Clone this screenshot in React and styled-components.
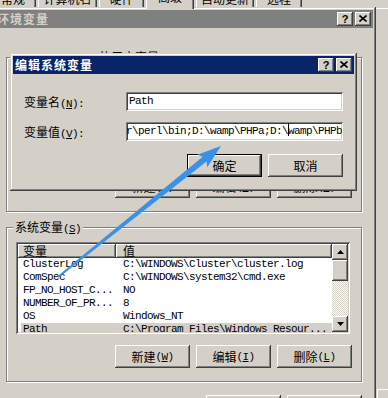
import React from 'react';
import styled, { createGlobalStyle, css } from 'styled-components';

const GlobalStyle = createGlobalStyle`
  html, body { margin: 0; padding: 0; background: #d4d0c8; }
  body {
    width: 388px; height: 398px; overflow: hidden;
    font-family: "Noto Sans CJK SC", "Liberation Sans", sans-serif;
    font-size: 12px; color: #000;
  }
  * { box-sizing: border-box; }
`;

const btnRaised = css`
  box-shadow: inset -1px -1px #404040, inset 1px 1px #fff, inset -2px -2px #808080;
`;
const winRaised = css`
  box-shadow: inset -1px -1px #404040, inset 1px 1px #d4d0c8, inset -2px -2px #808080, inset 2px 2px #fff;
`;
const sunken = css`
  box-shadow: inset 1px 1px #808080, inset -1px -1px #fff, inset 2px 2px #404040, inset -2px -2px #d4d0c8;
`;

const Screen = styled.div`
  position: relative;
  width: 388px;
  height: 398px;
  overflow: hidden;
`;

/* ---------- system properties (underneath) ---------- */
const PropsLayer = styled.div`
  display: flex;
  flex-direction: column;
  height: 100%;
`;
const TabStrip = styled.div`
  display: flex;
  align-items: flex-end;
  gap: 2px;
  height: 20px;
  margin: -12px 0 0 -10px;
`;
const Tab = styled.div`
  position: relative;
  flex: none;
  height: ${p => (p.$active ? 22 : 20)}px;
  margin-bottom: ${p => (p.$active ? -1 : 0)}px;
  z-index: ${p => (p.$active ? 1 : 0)};
  background: #d4d0c8;
  box-shadow: inset 1px 1px #fff, inset -1px 0 #404040, inset -2px 0 #808080;
  border-radius: 2px 2px 0 0;
  text-align: center;
  line-height: ${p => (p.$active ? 20 : 21)}px;
  font-size: 12px;
  white-space: nowrap;
`;
const TabPanel = styled.div`
  flex: 1;
  border-top: 1px solid #fff;
`;
const PropsFooter = styled.div`
  height: 17px;
  padding: 8px 0 0 377px;
`;
const PropsButton = styled.div`
  width: 75px;
  height: 23px;
  background: #d4d0c8;
  ${btnRaised};
`;

/* ---------- windows ---------- */
const EnvWindow = styled.div`
  position: absolute;
  left: -8px;
  top: 7px;
  width: 384px;
  height: 420px;
  padding: 3px;
  background: #d4d0c8;
  ${winRaised};
`;
const EditDialog = styled.div`
  position: absolute;
  left: 10px;
  top: 53px;
  width: 347px;
  padding: 3px;
  background: #d4d0c8;
  ${winRaised};
`;
const TitleBar = styled.div`
  height: 18px;
  display: flex;
  align-items: center;
  padding: 0 2px;
  background: ${p => (p.$active ? '#0a246a' : '#808080')};
  color: ${p => (p.$active ? '#fff' : '#d4d0c8')};
`;
const TitleText = styled.span`
  font-weight: 700;
  font-size: 12px;
  letter-spacing: 1px;
  line-height: 18px;
  white-space: nowrap;
`;
const TitleButtons = styled.div`
  margin-left: auto;
  display: flex;
  gap: 2px;
`;
const CaptionButton = styled.div`
  width: 16px;
  height: 14px;
  background: #d4d0c8;
  ${btnRaised};
  display: flex;
  align-items: center;
  justify-content: center;
  padding-bottom: 1px;
  color: #000;
  font: 700 11px "Liberation Sans", sans-serif;
  line-height: 12px;
`;

const EnvBody = styled.div`
  padding: 29px 11px 0 11px;
`;
const Group = styled.div`
  position: relative;
  margin-top: ${p => p.$mt || 0}px;
  border: 1px solid #808080;
  box-shadow: inset 1px 1px #fff, 1px 1px #fff;
  padding: 14px 9px 13px 9px;
`;
const GroupLabel = styled.span`
  position: absolute;
  top: -8px;
  left: 6px;
  padding: 0 2px;
  background: #d4d0c8;
  line-height: 14px;
  font-size: 12px;
  white-space: nowrap;
`;
const Latin = styled.span`
  font-family: "Liberation Mono", monospace;
  font-size: 11px;
  letter-spacing: -0.6px;
`;
const Mn = styled.u`
  text-decoration: underline;
  text-underline-offset: 1px;
`;

const ButtonRow = styled.div`
  display: flex;
  justify-content: flex-end;
  gap: 6px;
  margin-top: ${p => p.$mt || 0}px;
`;
const Button = styled.div`
  width: 75px;
  height: 23px;
  display: flex;
  align-items: center;
  justify-content: center;
  background: #d4d0c8;
  font-size: 12px;
  line-height: 14px;
  white-space: nowrap;
  ${p =>
    p.$default
      ? css`
          border: 1px solid #000;
          box-shadow: inset -1px -1px #404040, inset 1px 1px #fff, inset -2px -2px #808080;
        `
      : btnRaised};
`;

/* ---------- list view ---------- */
const ListView = styled.div`
  width: 334px;
  height: 92px;
  padding: 2px;
  background: #fff;
  ${sunken};
  display: flex;
  overflow: hidden;
`;
const ListMain = styled.div`
  flex: 1;
  min-width: 0;
  overflow: hidden;
`;
const Header = styled.div`
  display: flex;
  height: 14px;
`;
const HeaderCell = styled.div`
  flex: ${p => (p.$w ? 'none' : '1')};
  width: ${p => (p.$w ? `${p.$w}px` : 'auto')};
  padding-left: ${p => p.$pl}px;
  background: #d4d0c8;
  ${btnRaised};
  line-height: 14px;
  font-size: 12px;
`;
const Row = styled.div`
  display: flex;
  height: 13px;
  line-height: 13px;
  margin-left: 3px;
  background: ${p => (p.$selected ? '#d4d0c8' : 'transparent')};
  font-family: "Liberation Mono", monospace;
  font-size: 11px;
  letter-spacing: -0.6px;
  white-space: nowrap;
`;
const Cell = styled.div`
  flex: ${p => (p.$w ? 'none' : '1')};
  width: ${p => (p.$w ? `${p.$w}px` : 'auto')};
  padding-left: ${p => p.$pl}px;
  overflow: hidden;
`;
const ScrollBar = styled.div`
  width: 16px;
  flex: none;
  display: flex;
  flex-direction: column;
`;
const ScrollBtn = styled.div`
  width: 16px;
  height: ${p => p.$h}px;
  flex: none;
  background: #d4d0c8;
  ${btnRaised};
  display: flex;
  align-items: center;
  justify-content: center;
`;
const Track = styled.div`
  flex: 1;
  background: repeating-conic-gradient(#d4d0c8 0 25%, #fff 0 50%) 0 0 / 2px 2px;
`;

/* ---------- edit dialog body ---------- */
const EditBody = styled.div`
  display: grid;
  grid-template-columns: 1fr 217px;
  row-gap: 8px;
  padding: 18px 11px 11px 11px;
`;
const FieldLabel = styled.label`
  line-height: 19px;
  font-size: 12px;
  white-space: nowrap;
`;
const TextBox = styled.div`
  height: 19px;
  padding: 0 3px;
  background: #fff;
  ${sunken};
  font-family: "Liberation Mono", monospace;
  font-size: 11px;
  letter-spacing: -0.6px;
  line-height: 19px;
  white-space: nowrap;
  overflow: hidden;
  text-indent: ${p => p.$indent || 0}px;
`;
const Caret = styled.span`
  display: inline-block;
  width: 1px;
  height: 13px;
  margin-right: -1px;
  vertical-align: -2px;
  background: #000;
`;
const EditButtons = styled(ButtonRow)`
  grid-column: 1 / -1;
  margin-top: 2px;
`;

const Overlay = styled.svg`
  position: absolute;
  left: 0;
  top: 0;
  pointer-events: none;
`;

const CloseGlyph = () => (
  <svg width="8" height="7" viewBox="0 0 8 7">
    <path d="M0.5 0.5 L7.5 6.5 M7.5 0.5 L0.5 6.5" stroke="#000" strokeWidth="1.6" />
  </svg>
);
const Tri = ({ up }) => (
  <svg width="7" height="4" viewBox="0 0 7 4">
    <path d={up ? 'M3.5 0 L7 4 L0 4 Z' : 'M0 0 L7 0 L3.5 4 Z'} fill="#000" />
  </svg>
);

const Caption = ({ title, active }) => (
  <TitleBar $active={active}>
    <TitleText>{title}</TitleText>
    <TitleButtons>
      <CaptionButton>?</CaptionButton>
      <CaptionButton><CloseGlyph /></CaptionButton>
    </TitleButtons>
  </TitleBar>
);

const VarList = ({ rows }) => (
  <ListView>
    <ListMain>
      <Header>
        <HeaderCell $w={98} $pl={5}>变量</HeaderCell>
        <HeaderCell $pl={7}>值</HeaderCell>
      </Header>
      {rows.map(r => (
        <Row key={r[0]} $selected={r[2]}>
          <Cell $w={95} $pl={2}>{r[0]}</Cell>
          <Cell $pl={7}>{r[1]}</Cell>
        </Row>
      ))}
    </ListMain>
    <ScrollBar>
      <ScrollBtn $h={16}><Tri up /></ScrollBtn>
      <ScrollBtn $h={21} />
      <Track />
      <ScrollBtn $h={16}><Tri /></ScrollBtn>
    </ScrollBar>
  </ListView>
);

const tabs = [
  { label: '常规', w: 46 },
  { label: '计算机名', w: 59 },
  { label: '硬件', w: 45 },
  { label: '高级', w: 48, active: true },
  { label: '自动更新', w: 58 },
  { label: '远程', w: 46 },
];

const userRows = [
  ['TEMP', '%USERPROFILE%\\Local Settings\\Temp'],
  ['TMP', '%USERPROFILE%\\Local Settings\\Temp'],
];

const sysRows = [
  ['ClusterLog', 'C:\\WINDOWS\\Cluster\\cluster.log'],
  ['ComSpec', 'C:\\WINDOWS\\system32\\cmd.exe'],
  ['FP_NO_HOST_C...', 'NO'],
  ['NUMBER_OF_PR...', '8'],
  ['OS', 'Windows_NT'],
  ['Path', 'C:\\Program Files\\Windows Resour...', true],
];

const Label = ({ zh, m, colon }) => (
  <>
    {zh}
    <Latin>(<Mn>{m}</Mn>){colon ? ':' : ''}</Latin>
  </>
);

export default function App() {
  return (
    <>
      <GlobalStyle />
      <Screen>
        <PropsLayer>
          <TabStrip>
            {tabs.map(t => (
              <Tab key={t.label} $active={t.active} style={{ width: t.w }}>
                {t.label}
              </Tab>
            ))}
          </TabStrip>
          <TabPanel />
          <PropsFooter>
            <PropsButton />
          </PropsFooter>
        </PropsLayer>

        <EnvWindow>
          <Caption title="环境变量" />
          <EnvBody>
            <Group>
              <GroupLabel>
                <Latin>Administrator </Latin>的用户变量<Latin>(<Mn>U</Mn>)</Latin>
              </GroupLabel>
              <VarList rows={userRows} />
              <ButtonRow $mt={11}>
                <Button><Label zh="新建" m="N" /></Button>
                <Button><Label zh="编辑" m="E" /></Button>
                <Button><Label zh="删除" m="D" /></Button>
              </ButtonRow>
            </Group>
            <Group $mt={15}>
              <GroupLabel><Label zh="系统变量" m="S" /></GroupLabel>
              <VarList rows={sysRows} />
              <ButtonRow $mt={11}>
                <Button><Label zh="新建" m="W" /></Button>
                <Button><Label zh="编辑" m="I" /></Button>
                <Button><Label zh="删除" m="L" /></Button>
              </ButtonRow>
            </Group>
            <ButtonRow $mt={13}>
              <Button>确定</Button>
              <Button>取消</Button>
            </ButtonRow>
          </EnvBody>
        </EnvWindow>

        <EditDialog>
          <Caption title="编辑系统变量" active />
          <EditBody>
            <FieldLabel><Label zh="变量名" m="N" colon /></FieldLabel>
            <TextBox>Path</TextBox>
            <FieldLabel><Label zh="变量值" m="V" colon /></FieldLabel>
            <TextBox $indent={-3}>
              r\perl\bin;D:\wamp\PHPa;D:\<Caret />wamp\PHPb
            </TextBox>
            <EditButtons>
              <Button $default>确定</Button>
              <Button>取消</Button>
            </EditButtons>
          </EditBody>
        </EditDialog>

        <Overlay width="388" height="398" viewBox="0 0 388 398">
          <polygon
            points="57.4,276.2 202.7,156.8 197.3,154.8 221,146 207.3,167.2 206.5,161.4 58.6,277.8"
            fill="#3a92e6"
          />
        </Overlay>
      </Screen>
    </>
  );
}
